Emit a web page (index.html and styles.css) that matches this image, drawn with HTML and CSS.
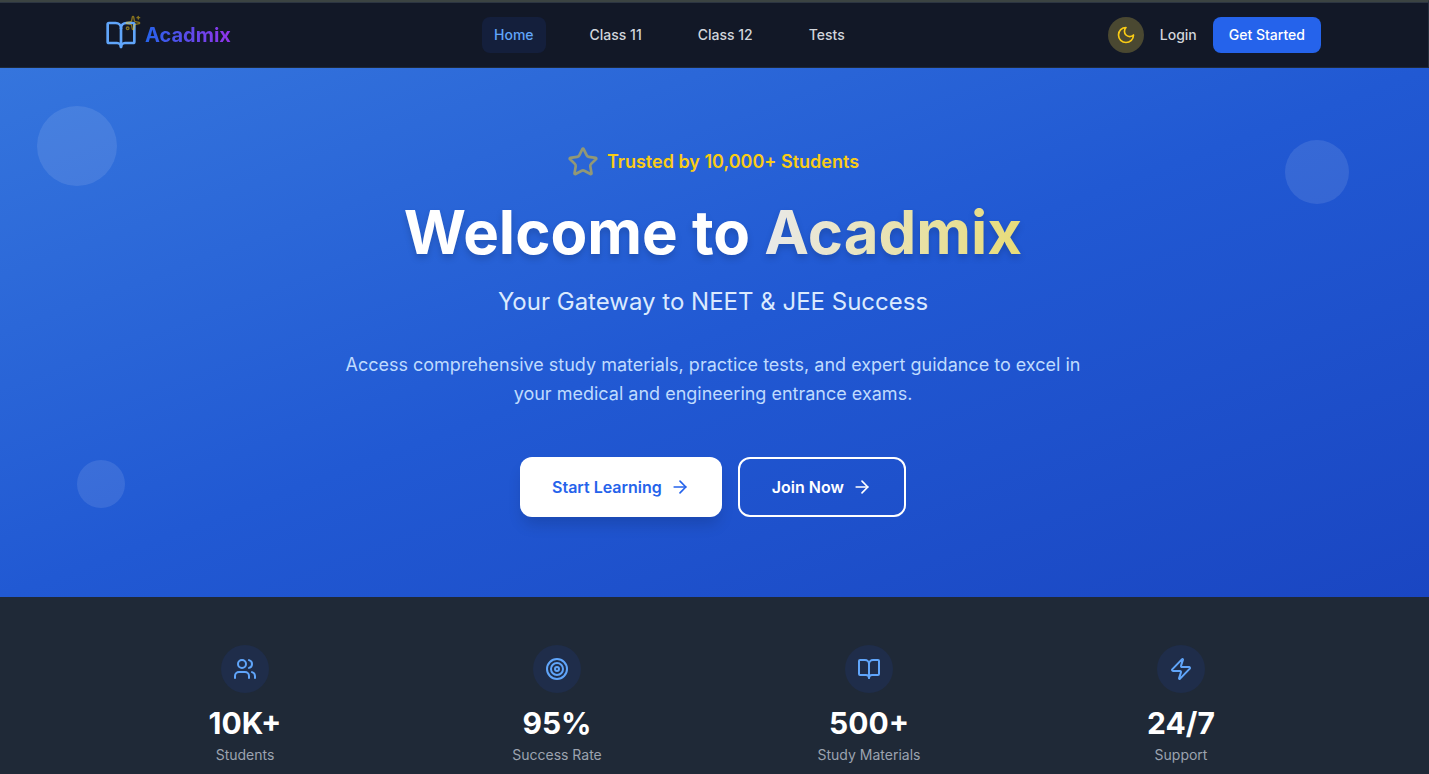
FILE: index.html
```html
<!DOCTYPE html>
<html lang="en">
<head>
<meta charset="utf-8">
<meta name="viewport" content="width=device-width, initial-scale=1">
<title>Acadmix</title>
<link rel="stylesheet" href="styles.css">
</head>
<body>
<header class="navbar">
  <div class="container navbar-inner">
    <a class="brand" href="#">
      <span class="brand-mark">
        <svg class="icon icon-xl" viewBox="0 0 24 24"><path d="M12 7v14"/><path d="M3 18a1 1 0 0 1-1-1V4a1 1 0 0 1 1-1h5a4 4 0 0 1 4 4 4 4 0 0 1 4-4h5a1 1 0 0 1 1 1v13a1 1 0 0 1-1 1h-6a3 3 0 0 0-3 3 3 3 0 0 0-3-3z"/></svg>
        <svg class="icon icon-sm brand-sparkle" viewBox="0 0 24 24"><path d="M11.017 2.814a1 1 0 0 1 1.966 0l1.051 5.558a2 2 0 0 0 1.594 1.594l5.558 1.051a1 1 0 0 1 0 1.966l-5.558 1.051a2 2 0 0 0-1.594 1.594l-1.051 5.558a1 1 0 0 1-1.966 0l-1.051-5.558a2 2 0 0 0-1.594-1.594l-5.558-1.051a1 1 0 0 1 0-1.966l5.558-1.051a2 2 0 0 0 1.594-1.594z"/><path d="M20 2v4"/><path d="M22 4h-4"/><circle cx="4" cy="20" r="2"/></svg>
      </span>
      <span class="brand-name">Acadmix</span>
    </a>
    <nav class="nav-links">
      <a class="nav-link active" href="#">Home</a>
      <a class="nav-link" href="#">Class 11</a>
      <a class="nav-link" href="#">Class 12</a>
      <a class="nav-link" href="#">Tests</a>
    </nav>
    <div class="nav-actions">
      <button class="theme-toggle" type="button" aria-label="Toggle theme"><svg class="icon icon-md" viewBox="0 0 24 24"><path d="M12 3a6 6 0 0 0 9 9 9 9 0 1 1-9-9Z"/></svg></button>
      <a class="login" href="#">Login</a>
      <a class="get-started" href="#">Get Started</a>
    </div>
  </div>
</header>
<main>
  <section class="hero">
    <span class="bubble bubble-a"></span>
    <span class="bubble bubble-b"></span>
    <span class="bubble bubble-c"></span>
    <div class="hero-content">
      <p class="trust">
        <svg class="icon icon-xl trust-star" viewBox="0 0 24 24"><path d="M11.525 2.295a.53.53 0 0 1 .95 0l2.31 4.679a2.123 2.123 0 0 0 1.595 1.16l5.166.756a.53.53 0 0 1 .294.904l-3.736 3.638a2.123 2.123 0 0 0-.611 1.878l.882 5.14a.53.53 0 0 1-.771.56l-4.618-2.428a2.122 2.122 0 0 0-1.973 0L6.396 21.01a.53.53 0 0 1-.77-.56l.881-5.139a2.122 2.122 0 0 0-.611-1.879L2.16 9.795a.53.53 0 0 1 .294-.906l5.165-.755a2.122 2.122 0 0 0 1.597-1.16z"/></svg>
        Trusted by 10,000+ Students
      </p>
      <h1 class="title">Welcome to <span class="title-accent">Acadmix</span></h1>
      <p class="subtitle">Your Gateway to NEET &amp; JEE Success</p>
      <p class="lead">Access comprehensive study materials, practice tests, and expert guidance to excel in your medical and engineering entrance exams.</p>
      <div class="hero-actions">
        <a class="cta cta-primary" href="#">Start Learning <svg class="icon icon-md" viewBox="0 0 24 24"><path d="M5 12h14"/><path d="m12 5 7 7-7 7"/></svg></a>
        <a class="cta cta-outline" href="#">Join Now <svg class="icon icon-md" viewBox="0 0 24 24"><path d="M5 12h14"/><path d="m12 5 7 7-7 7"/></svg></a>
      </div>
    </div>
  </section>
  <section class="stats">
    <div class="container stats-grid">
      <div class="stat">
        <span class="stat-icon"><svg class="icon icon-lg" viewBox="0 0 24 24"><path d="M16 21v-2a4 4 0 0 0-4-4H6a4 4 0 0 0-4 4v2"/><circle cx="9" cy="7" r="4"/><path d="M22 21v-2a4 4 0 0 0-3-3.87"/><path d="M16 3.13a4 4 0 0 1 0 7.75"/></svg></span>
        <strong class="stat-value">10K+</strong>
        <span class="stat-label">Students</span>
      </div>
      <div class="stat">
        <span class="stat-icon"><svg class="icon icon-lg" viewBox="0 0 24 24"><circle cx="12" cy="12" r="10"/><circle cx="12" cy="12" r="6"/><circle cx="12" cy="12" r="2"/></svg></span>
        <strong class="stat-value">95%</strong>
        <span class="stat-label">Success Rate</span>
      </div>
      <div class="stat">
        <span class="stat-icon"><svg class="icon icon-lg" viewBox="0 0 24 24"><path d="M12 7v14"/><path d="M3 18a1 1 0 0 1-1-1V4a1 1 0 0 1 1-1h5a4 4 0 0 1 4 4 4 4 0 0 1 4-4h5a1 1 0 0 1 1 1v13a1 1 0 0 1-1 1h-6a3 3 0 0 0-3 3 3 3 0 0 0-3-3z"/></svg></span>
        <strong class="stat-value">500+</strong>
        <span class="stat-label">Study Materials</span>
      </div>
      <div class="stat">
        <span class="stat-icon"><svg class="icon icon-lg" viewBox="0 0 24 24"><path d="M4 14a1 1 0 0 1-.78-1.63l9.9-10.2a.5.5 0 0 1 .86.46l-1.92 6.02A1 1 0 0 0 13 10h7a1 1 0 0 1 .78 1.63l-9.9 10.2a.5.5 0 0 1-.86-.46l1.92-6.02A1 1 0 0 0 11 14z"/></svg></span>
        <strong class="stat-value">24/7</strong>
        <span class="stat-label">Support</span>
      </div>
    </div>
  </section>
</main>
</body>
</html>
```
FILE: styles.css
```css
* { box-sizing: border-box; }

body {
  margin: 0;
  background: #1f2937;
  color: #fff;
  font-family: Inter, "Liberation Sans", sans-serif;
  font-size: 16px;
  line-height: 24px;
}

a { color: inherit; text-decoration: none; }
p, h1 { margin: 0; }

.container {
  max-width: 1280px;
  margin: 0 auto;
  padding: 0 32px;
}

.icon {
  flex: none;
  display: block;
  fill: none;
  stroke: currentColor;
  stroke-width: 2;
  stroke-linecap: round;
  stroke-linejoin: round;
}
.icon-sm { width: 16px; height: 16px; }
.icon-md { width: 20px; height: 20px; }
.icon-lg { width: 24px; height: 24px; }
.icon-xl { width: 32px; height: 32px; }

.navbar {
  padding-right: 2px;
  background: #121827;
  border-top: 2px solid #3b4342;
  border-right: 1px solid #283240;
  border-bottom: 1px solid #1f2937;
  box-shadow: inset 0 1px 0 #2c3542;
}
.navbar-inner {
  display: flex;
  align-items: center;
  justify-content: space-between;
  height: 65px;
}

.brand { display: flex; align-items: center; gap: 8px; }
.brand-mark { position: relative; color: #60a5fa; }
.brand-sparkle {
  position: absolute;
  top: -4px;
  right: -4px;
  color: #facc15;
  opacity: 0.5;
}
.brand-name {
  font-size: 20px;
  line-height: 28px;
  font-weight: 700;
  color: transparent;
  background: linear-gradient(90deg, #2563eb, #9333ea);
  -webkit-background-clip: text;
  background-clip: text;
}

.nav-links { display: flex; align-items: center; gap: 32px; }
.nav-link, .login, .get-started {
  font-size: 14px;
  line-height: 20px;
  font-weight: 500;
  color: #d1d5db;
}
.nav-link { padding: 8px 12px; border-radius: 8px; }
.nav-link.active { color: #60a5fa; background: #141f3c; }

.nav-actions { display: flex; align-items: center; gap: 16px; }
.theme-toggle {
  padding: 8px;
  border: 0;
  border-radius: 50%;
  background: #4a4831;
  color: #facc15;
}
.get-started {
  padding: 8px 16px;
  border-radius: 8px;
  background: #2563eb;
  color: #fff;
}

.hero {
  position: relative;
  padding: 78px 35px 80px 32px;
  background: linear-gradient(to bottom right, #3575dd, #2159d3, #1a46c2);
}
.bubble {
  position: absolute;
  border-radius: 50%;
  background: #fff;
  opacity: 0.1;
}
.bubble-a { top: 38px; left: 37px; width: 80px; height: 80px; }
.bubble-b { top: 72px; right: 80px; width: 64px; height: 64px; }
.bubble-c { bottom: 89px; left: 77px; width: 48px; height: 48px; }

.hero-content {
  position: relative;
  display: flex;
  flex-direction: column;
  align-items: center;
  text-align: center;
}
.trust {
  display: flex;
  align-items: center;
  gap: 8px;
  margin-bottom: 24px;
  color: #facc15;
  font-size: 18px;
  line-height: 28px;
  font-weight: 600;
}
.trust-star { opacity: 0.5; }
.title {
  margin-bottom: 24px;
  font-size: 60px;
  line-height: 60px;
  font-weight: 700;
  filter: drop-shadow(0 4px 3px rgba(0, 0, 0, 0.15));
}
.title-accent {
  color: transparent;
  background: linear-gradient(90deg, #e9e9ea, #e8dc78);
  -webkit-background-clip: text;
  background-clip: text;
}
.subtitle {
  margin-bottom: 32px;
  color: #dbeafe;
  font-size: 24px;
  line-height: 32px;
}
.lead {
  max-width: 768px;
  margin-bottom: 49px;
  color: #bfdbfe;
  font-size: 18px;
  line-height: 29px;
}
.hero-actions { display: flex; gap: 16px; }
.cta {
  display: flex;
  align-items: center;
  gap: 8px;
  padding: 16px 32px;
  border-radius: 12px;
  font-weight: 600;
  line-height: 24px;
}
.cta-primary {
  background: #fff;
  color: #2563eb;
  box-shadow: 0 10px 15px -3px rgba(0, 0, 0, 0.15);
}
.cta-outline { border: 2px solid #fff; }

.stats { padding: 48px 3px 8px 0; }
.stats-grid {
  display: grid;
  grid-template-columns: repeat(4, 1fr);
  gap: 32px;
}
.stat { display: flex; flex-direction: column; align-items: center; }
.stat-icon {
  margin-bottom: 12px;
  padding: 12px;
  border-radius: 50%;
  background: #1f2d4a;
  color: #60a5fa;
}
.stat-value { font-size: 30px; line-height: 36px; font-weight: 700; }
.stat-label { margin-top: 4px; color: #9ca3af; font-size: 14px; line-height: 20px; }
```
